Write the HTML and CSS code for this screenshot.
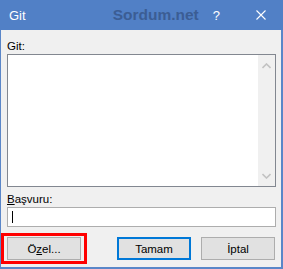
FILE: index.html
```html
<!DOCTYPE html>
<html lang="tr">
<head>
<meta charset="utf-8">
<title>Git</title>
<link rel="stylesheet" href="styles.css">
</head>
<body>
<div class="window">
  <div class="titlebar">
    <span class="title">Git</span>
    <span class="watermark">Sordum.net</span>
    <span class="help">?</span>
    <svg class="close" width="10" height="10" viewBox="0 0 10 10"><path d="M0.5 0.5L9.5 9.5M9.5 0.5L0.5 9.5" stroke="#fff" stroke-width="1.1" fill="none"/></svg>
  </div>
  <div class="content">
    <div class="label label-git">Git:</div>
    <div class="listbox">
      <div class="list-area"></div>
      <div class="scrollbar">
        <svg width="9" height="6" viewBox="0 0 9 6"><path d="M0.5 5L4.5 1L8.5 5" stroke="#c2c2c2" stroke-width="1.6" fill="none"/></svg>
        <svg width="9" height="6" viewBox="0 0 9 6"><path d="M0.5 1L4.5 5L8.5 1" stroke="#c2c2c2" stroke-width="1.6" fill="none"/></svg>
      </div>
    </div>
    <div class="label label-ref"><u>B</u>aşvuru:</div>
    <div class="input"><span class="caret"></span></div>
    <div class="buttons">
      <div class="btn-wrap highlighted"><button class="btn">Ö<u>z</u>el...</button></div>
      <button class="btn default">Tamam</button>
      <button class="btn">İptal</button>
    </div>
  </div>
</div>
</body>
</html>
```

FILE: styles.css
```css
html, body {
  margin: 0;
  padding: 0;
  background: #f0f0f0;
}
.window {
  width: 283px;
  height: 269px;
  box-sizing: border-box;
  border-left: 1px solid #5a86c8;
  border-right: 2px solid #5a86c8;
  border-bottom: 2px solid #5a86c8;
  background: #f0f0f0;
  display: flex;
  flex-direction: column;
  font-family: "Liberation Sans", Arial, sans-serif;
  font-size: 11.5px;
  color: #000;
}
.titlebar {
  height: 30px;
  margin-left: -1px;
  margin-right: -2px;
  background: #5180c6;
  display: flex;
  align-items: center;
  position: relative;
  flex: none;
}
.title {
  color: #fff;
  font-size: 13px;
  margin-left: 9px;
}
.watermark {
  margin-left: 87px;
  font-weight: bold;
  font-size: 15.5px;
  color: #3b5d94;
}
.help {
  color: #fff;
  font-size: 13px;
  margin-left: 14px;
}
.close {
  margin-left: 36px;
}
.content {
  padding: 9px 5px 0 6px;
  display: flex;
  flex-direction: column;
}
.label {
  height: 14px;
  line-height: 14px;
}
.label-git {
  margin-bottom: 1px;
}
.listbox {
  height: 133px;
  box-sizing: border-box;
  border: 1px solid #828790;
  background: #fff;
  display: flex;
}
.list-area {
  flex: 1;
}
.scrollbar {
  width: 17px;
  background: #f0f0f0;
  display: flex;
  flex-direction: column;
  justify-content: space-between;
  align-items: center;
  padding: 8px 0 7px;
  box-sizing: border-box;
}
.scrollbar svg {
  display: block;
}
.label-ref {
  margin-top: 5px;
  margin-bottom: 1px;
}
.label u, .btn u {
  text-decoration-thickness: 1px;
  text-underline-offset: 1px;
}
.input {
  height: 20px;
  box-sizing: border-box;
  border: 1px solid #adadad;
  background: #fff;
  display: flex;
  align-items: center;
  padding-left: 4px;
}
.caret {
  width: 1px;
  height: 12px;
  background: #000;
}
.buttons {
  margin-top: 10px;
  display: flex;
  align-items: flex-start;
}
.btn {
  width: 74px;
  height: 23px;
  box-sizing: border-box;
  border: 1px solid #adadad;
  background: #e1e1e1;
  font-family: "Liberation Sans", Arial, sans-serif;
  font-size: 11.5px;
  color: #000;
  padding: 0;
  margin: 0;
}
.btn-wrap {
  position: relative;
  width: 74px;
  height: 23px;
}
.btn-wrap .btn {
  display: block;
}
.highlighted::after {
  content: "";
  position: absolute;
  left: -6px;
  right: -6px;
  top: -4px;
  bottom: -4px;
  border: 3px solid #ff0000;
}
.default {
  margin-left: 36px;
  border: 2px solid #0078d7;
}
.btn + .btn:last-child {
  margin-left: 10px;
}
```
